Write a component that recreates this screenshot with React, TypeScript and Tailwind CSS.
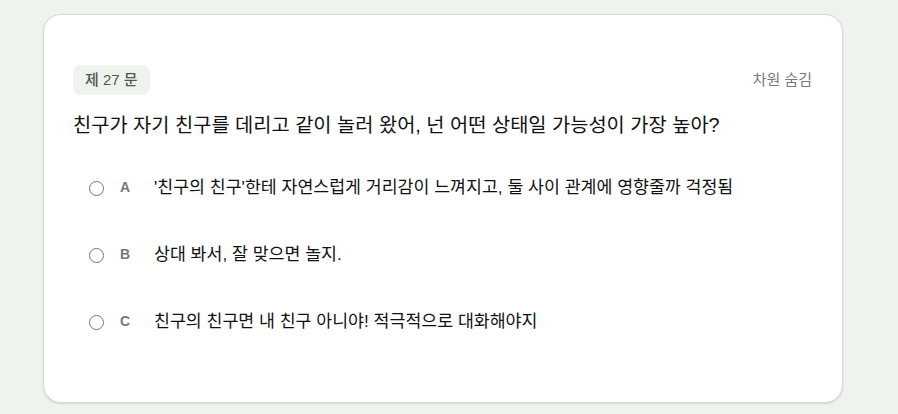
import React from "react";

const options = [
  { key: "A", text: "'친구의 친구'한테 자연스럽게 거리감이 느껴지고, 둘 사이 관계에 영향줄까 걱정됨" },
  { key: "B", text: "상대 봐서, 잘 맞으면 놀지." },
  { key: "C", text: "친구의 친구면 내 친구 아니야! 적극적으로 대화해야지" },
];

export default function App() {
  return (
    <div
      className="min-h-[414px] w-full bg-[#eef3ee] pt-[14px] pl-[43px]"
      style={{ fontFamily: '"Liberation Sans", "Noto Sans CJK JP", "Noto Sans CJK KR", sans-serif' }}
    >
      <div className="w-[800px] h-[389px] bg-white rounded-[18px] border border-[#d6d9d6] shadow-[0_1px_2px_rgba(0,0,0,0.12)] pl-[29px] pr-[30px] pt-[50px]">
        <div className="flex items-center justify-between">
          <div className="h-[30px] px-[12px] rounded-[8px] bg-[#eef3ee] flex items-center text-[15px] text-[#4b5a50] font-medium">
            제 27 문
          </div>
          <div className="text-[15px] text-[#7a7a7a]">차원 숨김</div>
        </div>
        <div className="mt-[16px] text-[19.8px] leading-[28px] text-[#111111]">
          친구가 자기 친구를 데리고 같이 놀러 왔어, 넌 어떤 상태일 가능성이 가장 높아?
        </div>
        <div className="mt-[37px] flex flex-col gap-[43px] pl-[17px]">
          {options.map((o) => (
            <div key={o.key} className="flex items-center h-[24px]">
              <span className="w-[15px] h-[15px] rounded-full border-[1.5px] border-[#777777] shrink-0 -ml-[1px]" />
              <span className="ml-[16px] w-[20px] text-[14px] font-semibold text-[#777777] -mt-[2px]">
                {o.key}
              </span>
              <span className="ml-[14px] text-[17.3px] text-[#111111]">{o.text}</span>
            </div>
          ))}
        </div>
      </div>
    </div>
  );
}
